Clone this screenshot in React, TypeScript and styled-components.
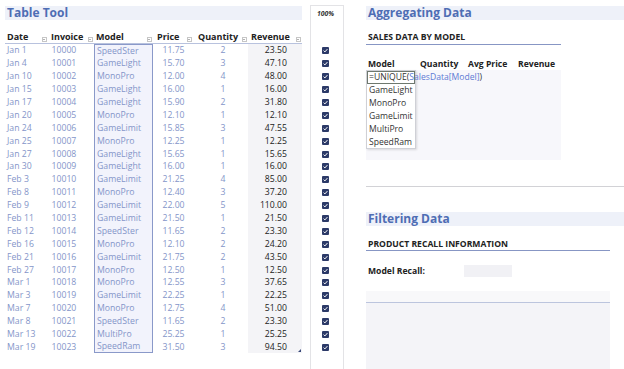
import React from "react";
import styled, { createGlobalStyle, css } from "styled-components";

const GlobalStyle = createGlobalStyle`
  html, body { margin: 0; padding: 0; background: #ffffff; }
  body { font-family: "Open Sans", "DejaVu Sans", sans-serif; }
  * { box-sizing: border-box; }
`;

// Data
const sales: [string, string, string, string, number, string][] = [
  ["Jan 1", "10000", "SpeedSter", "11.75", 2, "23.50"],
  ["Jan 4", "10001", "GameLight", "15.70", 3, "47.10"],
  ["Jan 10", "10002", "MonoPro", "12.00", 4, "48.00"],
  ["Jan 15", "10003", "GameLight", "16.00", 1, "16.00"],
  ["Jan 17", "10004", "GameLight", "15.90", 2, "31.80"],
  ["Jan 20", "10005", "MonoPro", "12.10", 1, "12.10"],
  ["Jan 24", "10006", "GameLimit", "15.85", 3, "47.55"],
  ["Jan 25", "10007", "MonoPro", "12.25", 1, "12.25"],
  ["Jan 27", "10008", "GameLight", "15.65", 1, "15.65"],
  ["Jan 30", "10009", "GameLight", "16.00", 1, "16.00"],
  ["Feb 3", "10010", "GameLimit", "21.25", 4, "85.00"],
  ["Feb 8", "10011", "MonoPro", "12.40", 3, "37.20"],
  ["Feb 9", "10012", "GameLimit", "22.00", 5, "110.00"],
  ["Feb 11", "10013", "GameLimit", "21.50", 1, "21.50"],
  ["Feb 12", "10014", "SpeedSter", "11.65", 2, "23.30"],
  ["Feb 16", "10015", "MonoPro", "12.10", 2, "24.20"],
  ["Feb 21", "10016", "GameLimit", "21.75", 2, "43.50"],
  ["Feb 27", "10017", "MonoPro", "12.50", 1, "12.50"],
  ["Mar 1", "10018", "MonoPro", "12.55", 3, "37.65"],
  ["Mar 3", "10019", "GameLimit", "22.25", 1, "22.25"],
  ["Mar 7", "10020", "MonoPro", "12.75", 4, "51.00"],
  ["Mar 8", "10021", "SpeedSter", "11.65", 2, "23.30"],
  ["Mar 13", "10022", "MultiPro", "25.25", 1, "25.25"],
  ["Mar 19", "10023", "SpeedRam", "31.50", 3, "94.50"],
];

const uniqueModels = ["GameLight", "MonoPro", "GameLimit", "MultiPro", "SpeedRam"];

const ROW_H = 12.9;
const COLS = "43px 46px 59px 40px 55px 54px";

const Page = styled.div`
  display: flex;
  width: 624px;
  height: 369px;
  overflow: hidden;
  background: #ffffff;
  color: #222;
`;

const LeftPanel = styled.section`
  width: 297px;
  margin-left: 5px;
  display: flex;
  flex-direction: column;
`;

const TitleBand = styled.h2<{ $gap?: number }>`
  margin: ${(p) => p.$gap ?? 5.5}px 0 0;
  height: 14px;
  padding-left: 2px;
  background: #eef1f9;
  color: #4e6db4;
  font-size: 12px;
  font-weight: 700;
  line-height: 14px;
  white-space: nowrap;
`;

const HeaderRow = styled.div`
  display: grid;
  grid-template-columns: ${COLS};
  height: 14px;
  margin-top: 10.5px;
  border-bottom: 1px solid #b8c2de;
`;

const HeadCell = styled.div<{ $pad: number }>`
  display: flex;
  align-items: center;
  justify-content: space-between;
  padding-left: ${(p) => p.$pad}px;
  padding-right: 1.5px;
  font-size: 9px;
  font-weight: 700;
  color: #222;
  white-space: nowrap;
`;

const FilterButton = styled.span`
  align-self: flex-end;
  margin-bottom: 1px;
  width: 5px;
  height: 5px;
  border: 1px solid #c6c6c6;
  background: #fff;
  display: flex;
  align-items: center;
  justify-content: center;
  &::after {
    content: "";
    border-left: 1px solid transparent;
    border-right: 1px solid transparent;
    border-top: 1.5px solid #666;
  }
`;

const Body = styled.div`
  position: relative;
  display: grid;
  grid-template-columns: ${COLS};
  grid-auto-rows: ${ROW_H}px;
`;

type Kind = "date" | "invoice" | "model" | "price" | "qty" | "rev";

const Cell = styled.div<{ $kind: Kind; $first?: boolean; $last?: boolean }>`
  display: flex;
  align-items: center;
  font-size: 8.7px;
  color: #8495c9;
  white-space: nowrap;
  ${(p) => p.$kind === "date" && css`padding-left: 2px;`}
  ${(p) => p.$kind === "invoice" && css`padding-left: 3.5px;`}
  ${(p) =>
    p.$kind === "model" &&
    css`
      padding-left: 2px;
      background: #f2f3fc;
      border-left: 1px solid #8a99c9;
      border-right: 1px solid #8a99c9;
      ${p.$first && "border-top: 1px solid #8a99c9;"}
      ${p.$last && "border-bottom: 1px solid #8a99c9;"}
    `}
  ${(p) => p.$kind === "price" && css`justify-content: center; padding-left: 1px;`}
  ${(p) => p.$kind === "qty" && css`justify-content: center; padding-left: 5px;`}
  ${(p) =>
    p.$kind === "rev" &&
    css`
      justify-content: flex-end;
      padding-right: 15px;
      background: #f4f4f7;
      color: #222;
    `}
`;

const ResizeHandle = styled.span`
  position: absolute;
  right: 1px;
  bottom: 1px;
  width: 0;
  height: 0;
  border-left: 3px solid transparent;
  border-bottom: 3px solid #3b4a7a;
`;

const CheckColumn = styled.aside`
  width: 34px;
  margin-left: 8px;
  margin-top: 5px;
  border: 1px solid #e3e3e6;
  border-bottom: none;
  display: flex;
  flex-direction: column;
  padding-right: 3px;
`;

const Zoom = styled.div`
  height: 38.5px;
  padding-top: 3px;
  text-align: center;
  font-size: 6.8px;
  font-weight: 700;
  font-style: italic;
  color: #333;
`;

const CheckCell = styled.div`
  height: ${ROW_H}px;
  display: flex;
  align-items: center;
  justify-content: center;
`;

const RightPanel = styled.section`
  width: 258px;
  margin-left: 22px;
  display: flex;
  flex-direction: column;
`;

const SectionHeading = styled.h3<{ $width: number }>`
  margin: 11.5px 0 0;
  width: ${(p) => p.$width}px;
  height: 13.5px;
  padding-left: 2px;
  border-bottom: 1.5px solid #8796c4;
  font-size: 8.6px;
  font-weight: 700;
  line-height: 12px;
  color: #222;
  white-space: nowrap;
`;

const SummaryHeader = styled.div`
  display: grid;
  grid-template-columns: 52px 48px 50px 45px;
  width: 195px;
  height: 12px;
  margin-top: 13px;
  align-items: center;
  font-size: 8.6px;
  font-weight: 700;
  color: #222;
  white-space: nowrap;
  & > span { padding-left: 2px; }
`;

const SpillArea = styled.div`
  width: 195px;
  height: 90.5px;
  background: #f7f7fb;
  padding-top: 0.5px;
`;

const SpillList = styled.div`
  width: 50px;
  background: #ffffff;
  border: 1px solid #cfd0d6;
  box-shadow: 1px 1px 2px rgba(0, 0, 0, 0.12);
`;

const SpillCell = styled.div<{ $active?: boolean }>`
  height: ${ROW_H}px;
  display: flex;
  align-items: center;
  padding-left: 2px;
  font-size: 8.6px;
  color: #333;
  white-space: nowrap;
  ${(p) => p.$active && css`outline: 1px solid #6e786e; outline-offset: -1px;`}
`;

const RangeRef = styled.span`
  color: #5c7ad4;
`;

const Divider = styled.hr`
  margin: 26px 0 0;
  border: none;
  border-top: 1px solid #d2d2d6;
  width: 258px;
`;

const RecallRow = styled.div`
  display: flex;
  align-items: center;
  height: 12px;
  margin-top: 14px;
  padding-left: 2px;
`;

const Label = styled.span`
  width: 96px;
  font-size: 8.6px;
  font-weight: 700;
  color: #222;
`;

const InputBox = styled.span`
  width: 48px;
  height: 12px;
  background: #f1f1f5;
`;

const RecallArea = styled.div`
  flex: 1;
  width: 244px;
  margin-top: 13.5px;
  background: #f4f4f8;
  border-top: 11.5px solid #f8f8fa;
  &::before {
    content: "";
    display: block;
    height: 1px;
    background: #bcc5de;
  }
`;

function CheckIcon() {
  return (
    <svg width="7" height="7" viewBox="0 0 7 7">
      <rect x="0" y="0" width="7" height="7" rx="1" fill="#2c3a68" />
      <path d="M1.6 3.6 L2.9 4.9 L5.4 2.1" stroke="#fff" strokeWidth="1" fill="none" />
    </svg>
  );
}

export default function App() {
  const heads: [string, number][] = [
    ["Date", 2],
    ["Invoice", 3],
    ["Model", 2],
    ["Price", 4],
    ["Quantity", 5],
    ["Revenue", 3],
  ];

  return (
    <Page>
      <GlobalStyle />

      {/* Table */}
      <LeftPanel>
        <TitleBand>Table Tool</TitleBand>
        <HeaderRow>
          {heads.map(([h, pad]) => (
            <HeadCell key={h} $pad={pad}>
              {h}
              <FilterButton />
            </HeadCell>
          ))}
        </HeaderRow>
        <Body>
          {sales.map((r, i) => {
            const first = i === 0;
            const last = i === sales.length - 1;
            return (
              <React.Fragment key={r[1]}>
                <Cell $kind="date">{r[0]}</Cell>
                <Cell $kind="invoice">{r[1]}</Cell>
                <Cell $kind="model" $first={first} $last={last}>
                  {r[2]}
                </Cell>
                <Cell $kind="price">{r[3]}</Cell>
                <Cell $kind="qty">{r[4]}</Cell>
                <Cell $kind="rev">{r[5]}</Cell>
              </React.Fragment>
            );
          })}
          <ResizeHandle />
        </Body>
      </LeftPanel>

      {/* Checkbox column */}
      <CheckColumn>
        <Zoom>100%</Zoom>
        {sales.map((r) => (
          <CheckCell key={r[1]}>
            <CheckIcon />
          </CheckCell>
        ))}
      </CheckColumn>

      {/* Right side */}
      <RightPanel>
        <TitleBand>Aggregating Data</TitleBand>
        <SectionHeading $width={195}>SALES DATA BY MODEL</SectionHeading>
        <SummaryHeader>
          <span>Model</span>
          <span>Quantity</span>
          <span>Avg Price</span>
          <span>Revenue</span>
        </SummaryHeader>
        <SpillArea>
          <SpillList>
            <SpillCell $active>
              =UNIQUE(<RangeRef>SalesData[Model]</RangeRef>)
            </SpillCell>
            {uniqueModels.map((m) => (
              <SpillCell key={m}>{m}</SpillCell>
            ))}
          </SpillList>
        </SpillArea>
        <Divider />
        <TitleBand $gap={25}>Filtering Data</TitleBand>
        <SectionHeading $width={244}>PRODUCT RECALL INFORMATION</SectionHeading>
        <RecallRow>
          <Label>Model Recall:</Label>
          <InputBox />
        </RecallRow>
        <RecallArea />
      </RightPanel>
    </Page>
  );
}
